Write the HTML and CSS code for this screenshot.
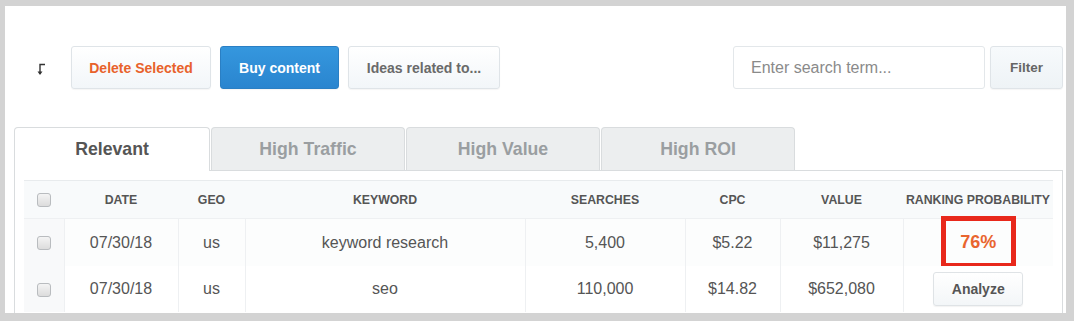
FILE: index.html
```html
<!DOCTYPE html>
<html>
<head>
<meta charset="utf-8">
<link rel="stylesheet" href="styles.css">
</head>
<body>
<div class="frame">
  <div class="toolbar">
    <span class="sort-icon">
      <svg width="10" height="14" viewBox="0 0 10 14">
        <path d="M4 12V2.5h5" fill="none" stroke="#333" stroke-width="1.4"/>
        <path d="M1.5 9.5L4 13l2.5-3.5z" fill="#333"/>
      </svg>
    </span>
    <button class="btn btn-delete">Delete Selected</button>
    <button class="btn btn-primary">Buy content</button>
    <button class="btn btn-ideas">Ideas related to...</button>
    <div class="spacer"></div>
    <div class="search">Enter search term...</div>
    <button class="btn btn-filter">Filter</button>
  </div>

  <div class="tabs">
    <div class="tab active">Relevant</div>
    <div class="tab">High Traffic</div>
    <div class="tab">High Value</div>
    <div class="tab">High ROI</div>
  </div>

  <div class="panel">
    <table class="grid">
      <colgroup>
        <col class="c-check"><col class="c-date"><col class="c-geo"><col class="c-kw">
        <col class="c-search"><col class="c-cpc"><col class="c-value"><col class="c-rank">
      </colgroup>
      <thead>
        <tr>
          <th><span class="cb"></span></th>
          <th>DATE</th>
          <th>GEO</th>
          <th>KEYWORD</th>
          <th>SEARCHES</th>
          <th>CPC</th>
          <th>VALUE</th>
          <th>RANKING PROBABILITY</th>
        </tr>
      </thead>
      <tbody>
        <tr class="row1">
          <td class="cbcell"><span class="cb"></span></td>
          <td>07/30/18</td>
          <td>us</td>
          <td>keyword research</td>
          <td>5,400</td>
          <td>$5.22</td>
          <td>$11,275</td>
          <td class="rank"><span class="prob">76%</span><span class="highlight"></span></td>
        </tr>
        <tr class="row2">
          <td class="cbcell"><span class="cb"></span></td>
          <td>07/30/18</td>
          <td>us</td>
          <td>seo</td>
          <td>110,000</td>
          <td>$14.82</td>
          <td>$652,080</td>
          <td class="rank"><button class="analyze">Analyze</button></td>
        </tr>
      </tbody>
    </table>
  </div>
</div>
</body>
</html>
```

FILE: styles.css
```css
html, body {
  margin: 0;
  padding: 0;
}
body {
  background: #d3d3d3;
  font-family: "Liberation Sans", Arial, sans-serif;
  width: 1074px;
  height: 321px;
  overflow: hidden;
}
.frame {
  background: #fff;
  margin: 6px 8px 0 5px;
  height: 307px;
  overflow: hidden;
  padding: 0 3px 0 9px;
  box-sizing: border-box;
}
.toolbar {
  display: flex;
  align-items: center;
  height: 43px;
  margin-top: 40px;
}
.sort-icon {
  display: flex;
  margin-left: 22px;
  margin-right: 25px;
  margin-top: 2px;
}
.btn {
  height: 43px;
  box-sizing: border-box;
  border: 1px solid #dfe4e8;
  border-radius: 3px;
  background: linear-gradient(#ffffff, #f2f6f9);
  font-family: "Liberation Sans", Arial, sans-serif;
  font-weight: bold;
  font-size: 14px;
  color: #666;
  padding: 0;
  box-shadow: 0 1px 1px rgba(0,0,0,0.04);
}
.btn-delete {
  width: 140px;
  color: #e8622b;
  margin-right: 9px;
}
.btn-primary {
  width: 119px;
  color: #fff;
  background: linear-gradient(#3597de, #2a85cf);
  border-color: #2a7fc4;
  margin-right: 9px;
}
.btn-ideas {
  width: 152px;
  color: #6a6a6a;
}
.spacer {
  flex: 1;
}
.search {
  width: 252px;
  height: 43px;
  box-sizing: border-box;
  border: 1px solid #e3e7ea;
  border-radius: 3px;
  padding-left: 17px;
  display: flex;
  align-items: center;
  font-size: 16px;
  color: #8a8a8a;
  margin-right: 5px;
}
.btn-filter {
  width: 73px;
  color: #666;
  font-size: 13.5px;
  background: linear-gradient(#f7fafc, #eef3f6);
}
.tabs {
  display: flex;
  gap: 1px;
  margin-top: 38px;
  height: 43px;
  position: relative;
  z-index: 1;
}
.tab {
  width: 194px;
  box-sizing: border-box;
  border: 1px solid #d9dcde;
  border-bottom: none;
  border-radius: 4px 4px 0 0;
  background: #eceeef;
  display: flex;
  align-items: center;
  justify-content: center;
  font-size: 17.7px;
  font-weight: bold;
  color: #9a9ea1;
  height: 43px;
}
.tab.active {
  width: 196px;
  background: #fff;
  color: #555;
  height: 44px;
}
.panel {
  border: 1px solid #d9dcde;
  padding: 9px 9px 0 9px;
  height: 200px;
}
.grid {
  width: 1029px;
  border-collapse: collapse;
  table-layout: fixed;
  color: #555;
}
.c-check { width: 40px; }
.c-date { width: 114px; }
.c-geo { width: 67px; }
.c-kw { width: 280px; }
.c-search { width: 160px; }
.c-cpc { width: 95px; }
.c-value { width: 123px; }
.c-rank { width: 150px; }
.grid th {
  height: 37px;
  background: #f8fafb;
  border-top: 1px solid #e8ebed;
  border-bottom: 1px solid #eef0f2;
  font-size: 12.3px;
  font-weight: bold;
  color: #555;
  text-align: center;
  padding: 0;
  white-space: nowrap;
}
.grid td {
  text-align: center;
  font-size: 16px;
  color: #555;
  padding: 0;
  border-left: 1px solid #eef0f2;
}
.grid td:first-child {
  border-left: none;
}
.row1 td {
  height: 47px;
  background: #fcfdfd;
}
.row2 td {
  height: 46px;
  background: #fff;
}
.grid td.cbcell {
  background: #f8f9fa;
}
.cb {
  display: inline-block;
  width: 12px;
  height: 12px;
  border: 1px solid #b9bcbf;
  border-radius: 3px;
  background: linear-gradient(#f4f4f4, #dcdcdc);
  vertical-align: middle;
}
.grid td.rank {
  position: relative;
}
.prob {
  font-weight: bold;
  font-size: 18px;
  color: #e9652f;
}
.highlight {
  position: absolute;
  left: 37px;
  top: -3px;
  width: 75px;
  height: 52px;
  box-sizing: border-box;
  border: 5px solid #e8281b;
}
.analyze {
  width: 90px;
  height: 34px;
  border: 1px solid #dfe3e6;
  border-radius: 3px;
  background: linear-gradient(#ffffff, #f3f6f8);
  font-family: "Liberation Sans", Arial, sans-serif;
  font-weight: bold;
  font-size: 14px;
  color: #555;
  padding: 0;
  box-shadow: 0 1px 1px rgba(0,0,0,0.05);
}
```
